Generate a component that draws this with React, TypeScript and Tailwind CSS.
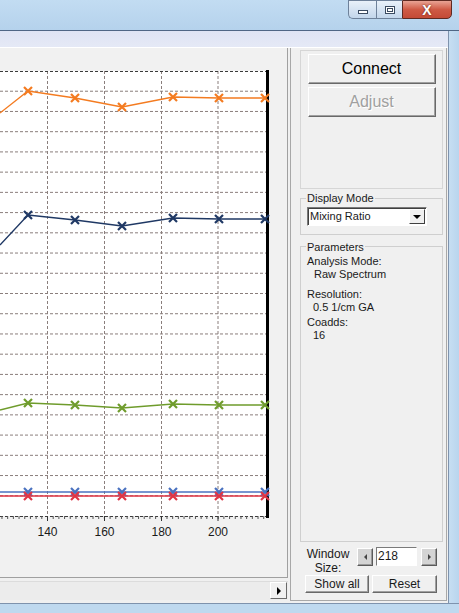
import type { ReactNode } from 'react';

const XS = [28, 75, 122, 173, 219, 265];

const SERIES = [
    { color: '#f47b20', from: 113, ys: [91, 98, 107, 97, 98, 98] },
    { color: '#1f3864', from: 245, ys: [215, 220, 226, 218, 219, 219] },
    { color: '#6f9c2c', from: 410, ys: [403, 405, 408, 404, 405, 405] },
    { color: '#4a72c0', from: 492, ys: [492, 492, 492, 492, 492, 492] },
    { color: '#e03444', from: 496, ys: [496, 496, 496, 496, 496, 496] },
];

const TOP = 71;
const BOTTOM = 516;
const H_LINES = Array.from({ length: 21 }, (_, i) => TOP + ((i + 1) * (BOTTOM - TOP)) / 22);
const V_LINES = [
    { x: 47.5, label: '140' },
    { x: 104.5, label: '160' },
    { x: 161.5, label: '180' },
    { x: 218, label: '200' },
];
// minor ticks every 2 units (~5.7px), counted from 140
const TICKS = Array.from({ length: 60 }, (_, i) => 47.5 + (i - 12) * 5.69).filter((x) => x > 0 && x < 266);

function Chart() {
    return (
        <svg width="287" height="529" viewBox="0 48 287 529" className="block">
            <rect x="-2" y={TOP} width="268" height={BOTTOM - TOP} fill="#ffffff" />
            {H_LINES.map((y) => (
                <line key={y} x1="0" x2="266" y1={y} y2={y} stroke="#8a7e7c" strokeDasharray="3 2" strokeWidth="1" />
            ))}
            {V_LINES.map((v) => (
                <line key={v.x} x1={v.x} x2={v.x} y1={TOP} y2={BOTTOM} stroke="#8a7e7c" strokeDasharray="3 2" strokeWidth="1" />
            ))}
            <line x1="0" x2="266" y1={TOP + 0.5} y2={TOP + 0.5} stroke="#3a3a3a" strokeDasharray="3 2" />
            <line x1="0" x2="266" y1={BOTTOM + 0.5} y2={BOTTOM + 0.5} stroke="#3a3a3a" strokeDasharray="3 2" />
            {TICKS.map((x) => (
                <line key={x} x1={x} x2={x} y1={BOTTOM} y2={BOTTOM + 3} stroke="#555" strokeWidth="1" />
            ))}
            {V_LINES.map((v) => (
                <line key={'t' + v.x} x1={v.x} x2={v.x} y1={BOTTOM} y2={BOTTOM + 5} stroke="#333" strokeWidth="1" />
            ))}
            <rect x="266" y={TOP - 1} width="3" height={BOTTOM - TOP + 3} fill="#000000" />
            {SERIES.map((s) => (
                <g key={s.color}>
                    <polyline
                        points={[`0,${s.from}`, ...XS.map((x, i) => `${x},${s.ys[i]}`)].join(' ')}
                        fill="none"
                        stroke={s.color}
                        strokeWidth="1.3"
                    />
                    {XS.map((x, i) => (
                        <path
                            key={x}
                            d={`M${x - 4} ${s.ys[i] - 4}L${x + 4} ${s.ys[i] + 4}M${x + 4} ${s.ys[i] - 4}L${x - 4} ${s.ys[i] + 4}`}
                            stroke={s.color}
                            strokeWidth="2.2"
                        />
                    ))}
                </g>
            ))}
            {V_LINES.map((v) => (
                <text
                    key={'l' + v.x}
                    x={v.x}
                    y="536"
                    textAnchor="middle"
                    fontSize="12"
                    fill="#1a1a1a"
                    fontFamily="'Liberation Sans', Arial, sans-serif"
                >
                    {v.label}
                </text>
            ))}
        </svg>
    );
}

function RaisedButton({ children, className }: { children: ReactNode; className: string }) {
    return (
        <div
            className={`flex items-center justify-center bg-[#f0f0f0] border border-t-white border-l-white border-r-[#696969] border-b-[#696969] shadow-[inset_-1px_-1px_0_#a0a0a0] ${className}`}
        >
            {children}
        </div>
    );
}

function ArrowButton({ dir }: { dir: 'left' | 'right' }) {
    return (
        <div className="w-[16px] h-[18px] flex items-center justify-center bg-[#d4d4d4] border border-t-white border-l-white border-r-[#5a5a5a] border-b-[#5a5a5a] shadow-[inset_-1px_-1px_0_#9a9a9a]">
            <span
                className={`block w-0 h-0 border-y-[3px] border-y-transparent ${
                    dir === 'left' ? 'border-r-[3px] border-r-[#444]' : 'border-l-[3px] border-l-[#444]'
                }`}
            />
        </div>
    );
}

function CaptionButtons() {
    return (
        <div className="flex h-[19px]">
            <div className="w-[28px] h-full flex items-center justify-center border border-[#6e819a] border-r-0 rounded-bl-[5px] bg-gradient-to-b from-[#e9f1fa] to-[#c3d6eb]">
                <span className="block mt-[5px] w-[10px] h-[4px] bg-white border border-[#3a4a60]" />
            </div>
            <div className="w-[26px] h-full flex items-center justify-center border border-[#6e819a] border-r-0 bg-gradient-to-b from-[#e9f1fa] to-[#c3d6eb]">
                <span className="block w-[10px] h-[8px] border border-[#3a4a60] bg-white shadow-[inset_0_0_0_1px_#ffffff,inset_0_0_0_2px_#3a4a60]" />
            </div>
            <div className="w-[50px] h-full flex items-center justify-center border border-[#5f2a22] rounded-br-[5px] bg-gradient-to-b from-[#e8a394] via-[#cf5a45] to-[#c44a36]">
                <span className="text-white font-bold text-[14px] leading-none [text-shadow:0_0_2px_#5a1a10]">X</span>
            </div>
        </div>
    );
}

export default function App() {
    return (
        <div className="w-[459px] h-[613px] overflow-hidden flex flex-col bg-[#bed9f0] font-['Liberation_Sans',Arial,sans-serif] text-[11px] text-[#1a1a1a]">
            {/* title bar */}
            <div className="h-[30px] shrink-0 flex justify-end pr-[7px] bg-gradient-to-b from-[#c2dcf2] to-[#b5d2ec]">
                <CaptionButtons />
            </div>
            <div className="h-px shrink-0 bg-[#4f6685]" />

            <div className="flex-1 flex min-h-0">
                <div className="w-[448px] flex flex-col">
                    {/* menu strip */}
                    <div className="h-[16px] shrink-0 bg-gradient-to-b from-[#dfe4f4] to-[#e5e9f6]" />
                    <div className="h-px shrink-0 bg-white" />

                    {/* client */}
                    <div className="flex-1 flex bg-[#f0f0f0]">
                        {/* chart side */}
                        <div className="w-[288px] flex flex-col">
                            <div className="h-[530px] border-r border-b border-r-[#a0a0a0] border-b-[#a0a0a0] bg-[#f1f1f1]">
                                <Chart />
                            </div>
                            <div className="mt-[3px] h-[19px] flex justify-end bg-[#ececec] border-t border-[#dcdcdc]">
                                <div className="w-[17px] h-[17px] mr-px flex items-center justify-center bg-[#f0f0f0] border border-t-white border-l-white border-r-[#696969] border-b-[#696969]">
                                    <span className="block w-0 h-0 border-y-[4px] border-y-transparent border-l-[4px] border-l-black" />
                                </div>
                            </div>
                        </div>

                        {/* right panel */}
                        <div className="ml-[2px] w-[157px] h-[553px] border-l border-r border-b border-[#a8a8a8] flex flex-col pl-[9px] pr-[3px] pt-[2px]">
                            <div className="h-[139px] border border-[#d6d6d6] flex flex-col items-center pt-[3px] gap-[3px]">
                                <RaisedButton className="w-[128px] h-[30px] text-[16px] text-black">Connect</RaisedButton>
                                <RaisedButton className="w-[128px] h-[30px] text-[16px] text-[#a0a0a0] [text-shadow:1px_1px_0_#ffffff]">
                                    Adjust
                                </RaisedButton>
                            </div>

                            <div className="mt-[3px] h-[43px] relative">
                                <div className="absolute left-0 right-0 top-[6px] bottom-0 border border-[#cfcfcf]" />
                                <span className="absolute left-[6px] top-0 px-px bg-[#f0f0f0] leading-[12px]">Display Mode</span>
                                <div className="absolute left-[7px] top-[15px] w-[120px] h-[19px] bg-white border border-t-[#7a7a7a] border-l-[#7a7a7a] border-r-white border-b-white shadow-[inset_1px_1px_0_#404040] flex items-center">
                                    <span className="flex-1 pl-[2px] leading-none">Mixing Ratio</span>
                                    <div className="w-[16px] h-[15px] mr-px bg-[#f0f0f0] border border-t-white border-l-white border-r-[#404040] border-b-[#404040] flex items-center justify-center">
                                        <span className="block w-0 h-0 border-x-[4px] border-x-transparent border-t-[4px] border-t-black" />
                                    </div>
                                </div>
                            </div>

                            <div className="mt-[7px] h-[300px] relative">
                                <div className="absolute left-0 right-0 top-[4px] bottom-0 border border-[#cfcfcf]" />
                                <span className="absolute left-[6px] top-[-1px] px-px bg-[#f0f0f0] leading-[12px]">Parameters</span>
                                <div className="absolute left-[7px] top-[13px] flex flex-col leading-[13px]">
                                    <span>Analysis Mode:</span>
                                    <span className="pl-[7px]">Raw Spectrum</span>
                                    <span className="mt-[7px]">Resolution:</span>
                                    <span className="pl-[6px]">0.5 1/cm GA</span>
                                    <span className="mt-[2px]">Coadds:</span>
                                    <span className="pl-[6px]">16</span>
                                </div>
                            </div>

                            <div className="mt-[5px] flex items-start pl-[8px]">
                                <div className="w-[40px] flex flex-col items-center text-[12px] leading-[14px]">
                                    <span>Window</span>
                                    <span>Size:</span>
                                </div>
                                <div className="ml-[9px] mt-[1px]">
                                    <ArrowButton dir="left" />
                                </div>
                                <div className="ml-[3px] w-[41px] h-[19px] bg-white border border-t-[#7a7a7a] border-l-[#7a7a7a] border-r-white border-b-white text-[12px] leading-[16px] pl-[1px]">
                                    218
                                </div>
                                <div className="ml-[4px] mt-[1px]">
                                    <ArrowButton dir="right" />
                                </div>
                            </div>
                            <div className="flex gap-[3px] ml-[5px]">
                                <RaisedButton className="w-[64px] h-[18px] text-[12px]">Show all</RaisedButton>
                                <RaisedButton className="w-[65px] h-[18px] text-[12px]">Reset</RaisedButton>
                            </div>
                        </div>
                    </div>
                </div>
                {/* right frame */}
                <div className="flex-1 border-l border-[#7f93ad] bg-gradient-to-r from-[#c7def2] to-[#b9d5ee]" />
            </div>
            {/* bottom frame */}
            <div className="h-[10px] shrink-0 border-t border-[#7f93ad] bg-[#bfd9ef]" />
        </div>
    );
}
